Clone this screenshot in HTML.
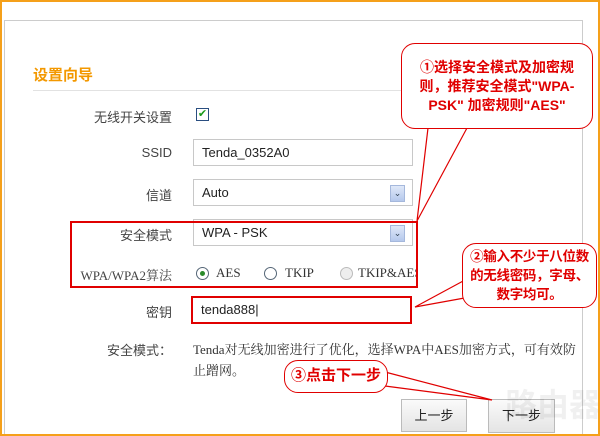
<!DOCTYPE html>
<html><head><meta charset="utf-8"><style>
*{margin:0;padding:0;box-sizing:border-box}
html,body{width:600px;height:436px;overflow:hidden}
body{background:#fff;font-family:"Liberation Sans","Noto Sans CJK SC",sans-serif;position:relative;font-size:13px;color:#333}
.a{position:absolute}
.frame{left:0;top:0;width:600px;height:436px;border:2px solid #f5a01a}
.panel{left:4px;top:20px;width:579px;height:414px;border:1px solid #ccc;border-bottom:none}
.lbl{width:120px;text-align:right;left:52px;color:#444;font-size:13px}
.inp{border:1px solid #c8c8c8;background:#fff;height:27px;padding-left:8px;line-height:25px;font-size:13px;color:#222}
.dd{position:absolute;right:7px;top:5px;width:15px;height:17px;background:linear-gradient(#dfe8f8,#b5c8ec);border:1px solid #a5b8dc;font-size:9px;color:#345;text-align:center;line-height:15px}
.red{border:2px solid #e00000}
.call{border:1.5px solid #e00000;border-radius:14px;background:#fff;color:#e00000;font-weight:bold;text-align:center;font-size:14px;line-height:19px;white-space:nowrap}
.radio{width:13px;height:13px;border:1px solid #567;border-radius:50%;background:#fff}
.btn{border:1px solid #bbb;background:linear-gradient(#fafafa,#e4e4e4);text-align:center;line-height:31px;font-size:13px;color:#222}
.serif{font-family:"Liberation Serif","Noto Serif CJK SC",serif}
</style></head><body>
<div class="a panel"></div>
<div class="a" style="left:33px;top:64px;font-size:15px;color:#f39800;font-weight:bold">设置向导</div>
<div class="a" style="left:33px;top:90px;width:380px;height:1px;background:#e2e2e2"></div>

<div class="a lbl" style="top:107px">无线开关设置</div>
<div class="a" style="left:196px;top:108px;width:13px;height:13px;border:1px solid #2a4e80;color:#1a9a1a;font-size:11px;line-height:11px;text-align:center">✔</div>

<div class="a lbl" style="top:145px">SSID</div>
<div class="a inp" style="left:193px;top:139px;width:220px">Tenda_0352A0</div>

<div class="a lbl" style="top:185px">信道</div>
<div class="a inp" style="left:193px;top:179px;width:220px">Auto<div class="dd">⌄</div></div>

<div class="a lbl" style="top:225px">安全模式</div>
<div class="a inp" style="left:193px;top:219px;width:220px">WPA - PSK<div class="dd">⌄</div></div>

<div class="a lbl serif" style="top:265px">WPA/WPA2算法</div>
<div class="a radio" style="left:196px;top:267px"><div style="width:5px;height:5px;background:#2a8a2a;border-radius:50%;margin:3px"></div></div>
<div class="a serif" style="left:216px;top:265px">AES</div>
<div class="a radio" style="left:264px;top:267px"></div>
<div class="a serif" style="left:285px;top:265px">TKIP</div>
<div class="a radio" style="left:340px;top:267px;border-color:#bbb;background:#eee"></div>
<div class="a serif" style="left:358px;top:265px;width:58px;overflow:hidden;white-space:nowrap">TKIP&amp;AES</div>
<div class="a red" style="left:70px;top:221px;width:348px;height:67px"></div>

<div class="a lbl" style="top:302px">密钥</div>
<div class="a inp red" style="left:191px;top:296px;width:221px;height:28px;line-height:24px">tenda888|</div>

<div class="a lbl" style="top:340px">安全模式：</div>
<div class="a serif" style="left:193px;top:339px;width:385px;line-height:21px;font-size:13px">Tenda对无线加密进行了优化，选择WPA中AES加密方式，可有效防<br>止蹭网。</div>

<div class="a btn" style="left:401px;top:399px;width:66px;height:33px">上一步</div>
<div class="a btn red" style="left:488px;top:399px;width:67px;height:34px">下一步</div>

<div class="a" style="left:505px;top:380px;font-size:32px;color:rgba(0,0,0,0.06);font-weight:bold;white-space:nowrap">路由器</div>

<svg class="a" style="left:0;top:0" width="600" height="436">
<polyline points="428,128 417,221 467,128" fill="#fff" stroke="#e00000" stroke-width="1.2"/>
<polyline points="465,280 415,307 470,297" fill="#fff" stroke="#e00000" stroke-width="1.2"/>
<polyline points="385,372 492,400 385,386" fill="#fff" stroke="#e00000" stroke-width="1.2"/>
</svg>
<div class="a call" style="left:401px;top:43px;width:192px;height:86px;padding-top:14px">①选择安全模式及加密规<br>则，推荐安全模式"WPA-<br>PSK" 加密规则"AES"</div>
<div class="a call" style="left:462px;top:243px;width:135px;height:65px;padding-top:3px;font-size:13.5px;letter-spacing:-0.3px">②输入不少于八位数<br>的无线密码，字母、<br>数字均可。</div>
<div class="a call" style="left:284px;top:360px;width:104px;height:33px;line-height:30px;font-size:15px">③点击下一步</div>
<div class="a frame"></div>
</body></html>
